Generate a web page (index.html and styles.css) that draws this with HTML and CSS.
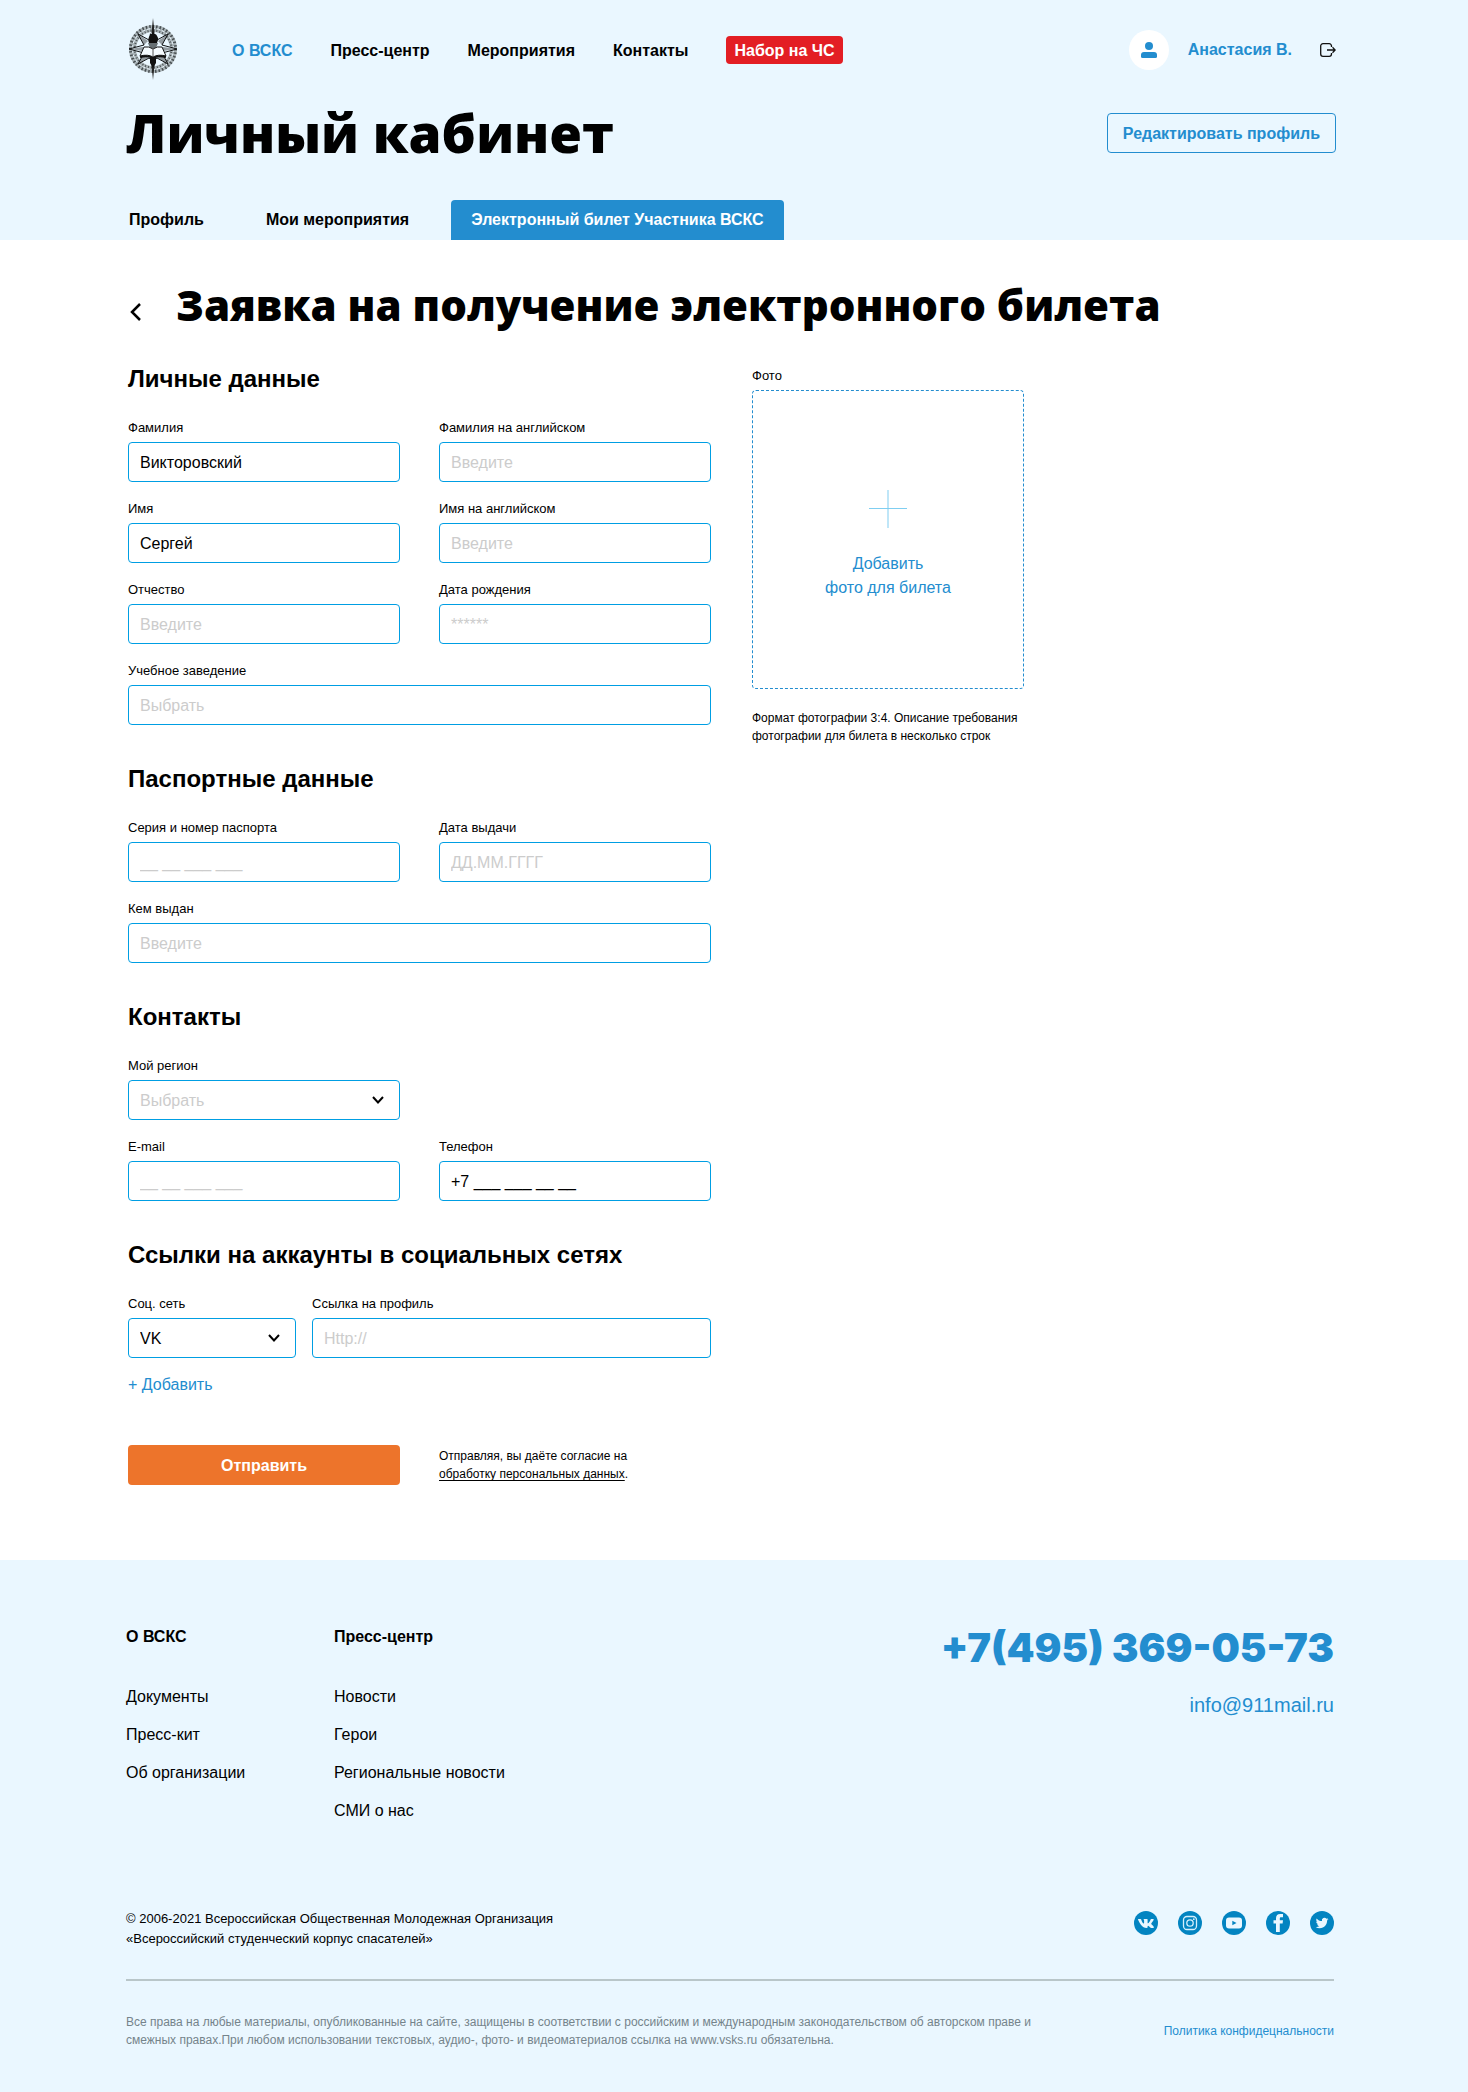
FILE: index.html
```
<!DOCTYPE html>
<html lang="ru">
<head>
<meta charset="utf-8">
<meta name="viewport" content="width=device-width, initial-scale=1">
<title>Личный кабинет — ВСКС</title>
<link rel="stylesheet" href="styles.css">
</head>
<body>
<header class="header">
  <div class="topbar">
    <a class="logo" href="#" aria-label="ВСКС">
      <svg width="50" height="62" viewBox="0 0 50 62">
        <circle cx="25" cy="31" r="20.5" fill="none" stroke="#a9b3b7" stroke-width="7"/>
        <circle cx="25" cy="31" r="22.5" fill="none" stroke="#4a5154" stroke-width="3" stroke-dasharray="1.5 2"/>
        <circle cx="25" cy="31" r="18.5" fill="none" stroke="#4a5154" stroke-width="2" stroke-dasharray="1 2"/>
        <circle cx="25" cy="31" r="20.5" fill="none" stroke="#eaf7ff" stroke-width="1" stroke-dasharray="3 2"/>
        <circle cx="25" cy="31" r="16.5" fill="#eaf7ff"/>
        <path d="M10 16 21 22 25 19 29 22 40 16 34 27 49 31 34 35 40 46 29 40 25 43 21 40 10 46 16 35 1 31 16 27Z" fill="#eaf7ff" stroke="#101213"/>
        <path d="M25 0 26.500 15H23.500ZM25 62 26.500 47H23.500Z" fill="#222"/>
        <path d="M10 16 20 23 16 27ZM40 16 30 23 34 27ZM10 46 16 36 20 40ZM40 46 34 36 30 40ZM1 31 15 29V33ZM49 31 35 29V33Z" fill="#111" opacity=".4"/>
        <path d="M21 25C19 20 22 19 22 15 23 17 24 16 25 13 26 17 28 15 29 18 31 21 30 22 29 25Z" fill="#111"/>
        <path d="M20 25H30L28 30H22Z" fill="#666f73"/>
        <path d="M16 29Q21 28 25 31 29 28 34 29L38 38Q30 36 25 39 20 36 12 38Z" fill="#f5fbff" stroke="#111"/>
        <path d="M12 39Q20 37 25 40 30 37 38 39" fill="none" stroke="#111" stroke-width="2"/>
        <path d="M22 40H28V45L25 50 22 45Z" fill="#111"/>
        <path d="M25 30V39" stroke="#555"/>
      </svg>
    </a>
    <nav class="nav" aria-label="Основное меню">
      <a class="nav-link nav-link-active" href="#">О ВСКС</a>
      <a class="nav-link" href="#">Пресс-центр</a>
      <a class="nav-link" href="#">Мероприятия</a>
      <a class="nav-link" href="#">Контакты</a>
      <a class="nav-link nav-cta" href="#">Набор на ЧС</a>
    </nav>
    <div class="account">
      <a class="user" href="#">
        <span class="avatar">
          <svg width="16" height="16" viewBox="0 0 16 16" fill="#238dcf"><circle cx="8" cy="4" r="4"/><path d="M3 10h10a3 3 0 0 1 3 3v1.500a1.500 1.500 0 0 1-1.500 1.500h-13A1.500 1.500 0 0 1 0 14.500V13a3 3 0 0 1 3-3Z"/></svg>
        </span>
        Анастасия В.
      </a>
      <button class="icon-button" type="button" aria-label="Выйти">
        <svg width="16" height="14" viewBox="0 0 16 14" fill="none" stroke="#111" stroke-width="1.300"><path d="M11.500 4V3A2.300 2.300 0 0 0 9.200.700H3A2.300 2.300 0 0 0 .700 3v8A2.300 2.300 0 0 0 3 13.300h6.200A2.300 2.300 0 0 0 11.500 11v-1"/><path d="M7 7h8M12.500 4.300 15.200 7l-2.700 2.700"/></svg>
      </button>
    </div>
  </div>
  <div class="title-row">
    <h1 class="page-title">Личный кабинет</h1>
    <button class="edit-button" type="button">Редактировать профиль</button>
  </div>
  <nav class="tabs" aria-label="Разделы кабинета">
    <a class="tab" href="#">Профиль</a>
    <a class="tab" href="#">Мои мероприятия</a>
    <a class="tab tab-active" href="#">Электронный билет Участника ВСКС</a>
  </nav>
</header>

<main class="main">
  <div class="heading-row">
    <a class="back" href="#" aria-label="Назад">
      <svg width="14" height="18" viewBox="0 0 14 18" fill="none" stroke="#000" stroke-width="2.500"><path d="M12 1 4 9l8 8"/></svg>
    </a>
    <h2 class="form-title">Заявка на получение электронного билета</h2>
  </div>

  <form class="form">
    <div class="form-main">
      <section class="section">
        <h3 class="section-title">Личные данные</h3>
        <div class="fields">
          <div class="field"><label class="label" for="surname">Фамилия</label><input class="control" id="surname" type="text" value="Викторовский"></div>
          <div class="field"><label class="label" for="surname-en">Фамилия на английском</label><input class="control" id="surname-en" type="text" placeholder="Введите"></div>
          <div class="field"><label class="label" for="name">Имя</label><input class="control" id="name" type="text" value="Сергей"></div>
          <div class="field"><label class="label" for="name-en">Имя на английском</label><input class="control" id="name-en" type="text" placeholder="Введите"></div>
          <div class="field"><label class="label" for="patronymic">Отчество</label><input class="control" id="patronymic" type="text" placeholder="Введите"></div>
          <div class="field"><label class="label" for="birth">Дата рождения</label><input class="control" id="birth" type="text" placeholder="******"></div>
          <div class="field field-wide"><label class="label" for="school">Учебное заведение</label><select class="control control-empty" id="school"><option>Выбрать</option></select></div>
        </div>
      </section>

      <section class="section">
        <h3 class="section-title">Паспортные данные</h3>
        <div class="fields">
          <div class="field"><label class="label" for="passport">Серия и номер паспорта</label><input class="control" id="passport" type="text" placeholder="__ __ ___ ___"></div>
          <div class="field"><label class="label" for="issued">Дата выдачи</label><input class="control" id="issued" type="text" placeholder="ДД.ММ.ГГГГ"></div>
          <div class="field field-wide"><label class="label" for="issuer">Кем выдан</label><input class="control" id="issuer" type="text" placeholder="Введите"></div>
        </div>
      </section>

      <section class="section">
        <h3 class="section-title">Контакты</h3>
        <div class="fields">
          <div class="field field-first">
            <label class="label" for="region">Мой регион</label>
            <div class="select"><select class="control control-empty" id="region"><option>Выбрать</option></select><svg class="chevron" width="12" height="8" viewBox="0 0 12 8" fill="none" stroke="#000" stroke-width="2"><path d="m1 1 5 5.500L11 1"/></svg></div>
          </div>
          <div class="field"><label class="label" for="email">E-mail</label><input class="control" id="email" type="email" placeholder="__ __ ___ ___"></div>
          <div class="field"><label class="label" for="phone">Телефон</label><input class="control" id="phone" type="tel" value="+7 ___ ___ __ __"></div>
        </div>
      </section>

      <section class="section">
        <h3 class="section-title">Ссылки на аккаунты в социальных сетях</h3>
        <div class="fields fields-social">
          <div class="field">
            <label class="label" for="network">Соц. сеть</label>
            <div class="select"><select class="control" id="network"><option>VK</option></select><svg class="chevron" width="12" height="8" viewBox="0 0 12 8" fill="none" stroke="#000" stroke-width="2"><path d="m1 1 5 5.500L11 1"/></svg></div>
          </div>
          <div class="field"><label class="label" for="profile">Ссылка на профиль</label><input class="control" id="profile" type="text" placeholder="Http://"></div>
        </div>
        <button class="add-button" type="button">+ Добавить</button>
      </section>

      <div class="submit-row">
        <button class="submit" type="submit">Отправить</button>
        <p class="note">Отправляя, вы даёте согласие на<br><a class="note-link" href="#">обработку персональных данных</a>.</p>
      </div>
    </div>

    <aside class="photo">
      <span class="label" id="photo-label">Фото</span>
      <button class="photo-drop" type="button" aria-describedby="photo-label">
        <svg width="38" height="38" viewBox="0 0 38 38" fill="none"><path d="M19 0v38" stroke="#bfe6f8" stroke-width="2"/><path d="M0 18.500h38" stroke="#7fcef1"/></svg>
        <span>Добавить<br>фото для билета</span>
      </button>
      <p class="note">Формат фотографии 3:4. Описание требования фотографии для билета в несколько строк</p>
    </aside>
  </form>
</main>

<footer class="footer">
  <div class="footer-top">
    <nav class="footer-nav" aria-label="Меню в подвале">
      <div class="footer-col">
        <h4 class="footer-title">О ВСКС</h4>
        <a class="footer-link" href="#">Документы</a>
        <a class="footer-link" href="#">Пресс-кит</a>
        <a class="footer-link" href="#">Об организации</a>
      </div>
      <div class="footer-col">
        <h4 class="footer-title">Пресс-центр</h4>
        <a class="footer-link" href="#">Новости</a>
        <a class="footer-link" href="#">Герои</a>
        <a class="footer-link" href="#">Региональные новости</a>
        <a class="footer-link" href="#">СМИ о нас</a>
      </div>
    </nav>
    <address class="contacts">
      <a class="phone" href="tel:+74953690573">+7(495) 369-05-73</a>
      <a class="email" href="mailto:info@911mail.ru">info@911mail.ru</a>
    </address>
  </div>
  <div class="footer-middle">
    <p class="copyright">© 2006-2021 Всероссийская Общественная Молодежная Организация<br>«Всероссийский студенческий корпус спасателей»</p>
    <div class="socials">
      <a class="social" href="#" aria-label="VK"><svg width="24" height="24" viewBox="0 0 24 24"><circle cx="12" cy="12" r="12" fill="#0384c1"/><path fill="#eaf7ff" d="M4.300 8h2.200c.400 0 .6.200.7.500.5 1.700 1.500 3.700 2.300 4 .5 0 .6-.4.6-1V9.800c0-.8-.3-1-.6-1.200 0-.3.300-.6.900-.6h2.700c.4 0 .5.200.5.600v3.100c0 .4.200.6.400.6.7 0 2-2.200 2.500-3.600.1-.4.300-.6.700-.6h2c.5 0 .6.300.5.700-.3 1.100-2.500 3.600-2.500 4 0 .6 2.600 2.400 2.700 3.400 0 .5-.3.700-.7.700h-2c-.4 0-.8-.2-1.200-.6-.7-.7-1.400-1.500-1.900-1.500-.4 0-.5.300-.5.800v.7c0 .400-.2.600-1 .6-2.200 0-4-.9-5.500-2.900C5.300 11.600 4.200 9.100 4 8.500c0-.3.100-.5.300-.5Z"/></svg></a>
      <a class="social" href="#" aria-label="Instagram"><svg width="24" height="24" viewBox="0 0 24 24"><circle cx="12" cy="12" r="12" fill="#0384c1"/><g fill="none" stroke="#d5effb" stroke-width="1.300"><rect x="5.500" y="5.500" width="13" height="13" rx="3.500"/><circle cx="12" cy="12" r="3.200"/></g><circle cx="15.800" cy="8.200" r=".9" fill="#d5effb"/></svg></a>
      <a class="social" href="#" aria-label="YouTube"><svg width="24" height="24" viewBox="0 0 24 24"><circle cx="12" cy="12" r="12" fill="#0384c1"/><rect x="4" y="6.500" width="16" height="11" rx="3" fill="#eaf7ff"/><path d="m10.300 9.800 4.200 2.200-4.200 2.200Z" fill="#0384c1"/></svg></a>
      <a class="social" href="#" aria-label="Facebook"><svg width="24" height="24" viewBox="0 0 24 24"><circle cx="12" cy="12" r="12" fill="#0384c1"/><path fill="#eaf7ff" d="M10 21v-8.500H7.500V9.300H10V7.200C10 4.500 11.500 3 14.200 3H17v3.200h-1.800c-1.100 0-1.400.5-1.400 1.400v1.700H17l-.4 3.200h-2.800V21Z"/></svg></a>
      <a class="social" href="#" aria-label="Twitter"><svg width="24" height="24" viewBox="0 0 24 24"><circle cx="12" cy="12" r="12" fill="#0384c1"/><path fill="#eaf7ff" d="M18.500 8.100c-.5.200-1 .4-1.500.4.500-.3.900-.8 1.100-1.400-.5.300-1 .5-1.600.6a2.600 2.600 0 0 0-4.500 2.400c-2.200-.1-4.100-1.100-5.400-2.700-.7 1.200-.3 2.700.8 3.500-.4 0-.8-.1-1.200-.3 0 1.300.9 2.300 2.100 2.600-.4.100-.8.100-1.200 0 .3 1 1.300 1.800 2.400 1.800A5.300 5.300 0 0 1 5.700 16c1.200.8 2.500 1.200 4 1.200 4.800 0 7.600-4.100 7.400-7.700.5-.4 1-.8 1.400-1.400Z"/></svg></a>
    </div>
  </div>
  <div class="footer-bottom">
    <p class="legal">Все права на любые материалы, опубликованные на сайте, защищены в соответствии с российским и международным законодательством об авторском праве и смежных правах.При любом использовании текстовых, аудио-, фото- и видеоматериалов ссылка на www.vsks.ru обязательна.</p>
    <a class="privacy" href="#">Политика конфидецнальности</a>
  </div>
</footer>
</body>
</html>
```
FILE: styles.css
```
*,
*::before,
*::after {
  box-sizing: border-box;
}

body {
  margin: 0;
  background: #fff;
  color: #000;
  font: 16px/24px "Liberation Sans", Arial, sans-serif;
}

h1, h2, h3, h4, p {
  margin: 0;
}

a {
  color: inherit;
  text-decoration: none;
}

button, input, select {
  font: inherit;
  color: inherit;
}

button {
  padding: 0;
  border: 0;
  background: none;
  cursor: pointer;
}

svg {
  display: block;
}

.header, .footer {
  background: #eaf7ff;
}

.header, .main, .footer {
  padding-left: 126px;
  padding-right: 134px;
}

/* Header */
.header {
  padding-top: 18px;
}

.topbar {
  display: flex;
  align-items: center;
}

.logo {
  margin-left: 2px;
}

.nav {
  display: flex;
  align-items: center;
  gap: 38px;
  margin-left: 54px;
}

.nav-link {
  padding: 3px 0 1px;
  font-weight: 700;
}

.nav-link-active {
  color: #238dcf;
}

.nav-cta {
  padding: 3px 8px 1px;
  border-radius: 4px;
  background: #e31e24;
  color: #fff;
}

.account {
  display: flex;
  align-items: center;
  gap: 28px;
  margin-left: auto;
  margin-right: -2px;
}

.user {
  display: flex;
  align-items: center;
  gap: 19px;
  color: #238dcf;
  font-weight: 700;
}

.topbar .nav,
.topbar .account {
  margin-top: 2px;
}

.avatar {
  display: grid;
  place-items: center;
  width: 40px;
  height: 40px;
  border-radius: 50%;
  background: #fff;
}

.title-row {
  display: flex;
  align-items: center;
  justify-content: space-between;
  margin-top: 23px;
  margin-right: -2px;
}

.page-title {
  font: 800 53px/60px "Open Sans", sans-serif;
}

.edit-button {
  height: 40px;
  padding: 1px 15px 0;
  border: 1px solid #238dcf;
  border-radius: 4px;
  color: #238dcf;
  font-weight: 700;
}

.tabs {
  display: flex;
  gap: 22px;
  margin-top: 37px;
  margin-left: -17px;
}

.tab {
  padding: 8px 20px;
  border-radius: 4px 4px 0 0;
  font-weight: 700;
}

.tab-active {
  background: #238dcf;
  color: #fff;
}

/* Application form */
.main {
  padding-top: 39px;
  padding-bottom: 75px;
}

.heading-row {
  display: flex;
  align-items: flex-end;
  gap: 34px;
}

.back {
  padding: 0 0 10px 2px;
}

.form-title {
  font: 800 42px/52px "Open Sans", sans-serif;
}

.form {
  display: grid;
  grid-template-columns: minmax(0, 583px) 272px;
  gap: 41px;
  align-items: start;
  margin-top: 32px;
  padding-left: 2px;
}

.section {
  margin-bottom: 38px;
}

.section-title {
  margin-bottom: 23px;
  font-size: 24px;
  line-height: 32px;
}

.fields {
  display: grid;
  grid-template-columns: 1fr 1fr;
  gap: 17px 39px;
}

.fields-social {
  grid-template-columns: 168px 1fr;
  column-gap: 16px;
}

.field-wide {
  grid-column: 1 / -1;
}

.field-first,
.field-first + .field {
  grid-column: 1;
}

.label {
  display: block;
  margin-bottom: 4px;
  font-size: 13px;
  line-height: 20px;
}

.control {
  display: block;
  width: 100%;
  height: 40px;
  padding: 2px 11px 0;
  border: 1px solid #009ee3;
  border-radius: 4px;
  background: #fff;
  appearance: none;
}

.control::placeholder {
  color: #ccc;
  opacity: 1;
}

.control-empty {
  color: #ccc;
}

.select {
  display: grid;
  align-items: center;
}

.select > * {
  grid-area: 1 / 1;
}

.chevron {
  justify-self: end;
  margin-right: 16px;
  pointer-events: none;
}

.add-button {
  display: block;
  margin-top: 15px;
  color: #238dcf;
}

.submit-row {
  display: grid;
  grid-template-columns: 1fr 1fr;
  align-items: center;
  gap: 39px;
  margin-top: 48px;
}

.submit {
  height: 40px;
  padding-top: 2px;
  border-radius: 4px;
  background: #ed742b;
  color: #fff;
  font-weight: 700;
}

.note {
  font-size: 12px;
  line-height: 18px;
}

.note-link {
  text-decoration: underline 1px;
  text-decoration-skip-ink: none;
  text-underline-offset: 2px;
}

.photo {
  margin-top: 3px;
}

.photo-drop {
  display: flex;
  flex-direction: column;
  align-items: center;
  justify-content: flex-end;
  gap: 24px;
  width: 100%;
  height: 299px;
  margin-bottom: 20px;
  padding-bottom: 88px;
  border: 1px dashed #238dcf;
  border-radius: 4px;
  color: #238dcf;
}

/* Footer */
.footer {
  padding-top: 65px;
  padding-bottom: 43px;
}

.footer-top {
  display: flex;
  justify-content: space-between;
}

.footer-nav {
  display: grid;
  grid-template-columns: 208px auto;
}

.footer-col {
  display: flex;
  flex-direction: column;
  gap: 14px;
}

.footer-title {
  margin-bottom: 22px;
  font-size: 16px;
}

.contacts {
  display: flex;
  flex-direction: column;
  align-items: flex-end;
  gap: 20px;
  color: #238dcf;
  font-style: normal;
}

.phone {
  font: 900 40px/46px Inter, sans-serif;
}

.email {
  font-size: 20px;
  line-height: 28px;
}

.footer-middle {
  display: flex;
  align-items: center;
  justify-content: space-between;
  margin-top: 86px;
  padding-bottom: 30px;
  border-bottom: 2px solid #b9c6c9;
}

.copyright {
  font-size: 13px;
  line-height: 20px;
}

.socials {
  display: flex;
  gap: 20px;
  margin-top: -12px;
}

.footer-bottom {
  display: flex;
  align-items: center;
  justify-content: space-between;
  gap: 40px;
  margin-top: 32px;
  font-size: 12px;
  line-height: 18px;
}

.legal {
  max-width: 920px;
  color: #75848b;
}

.privacy {
  color: #238dcf;
}
```
